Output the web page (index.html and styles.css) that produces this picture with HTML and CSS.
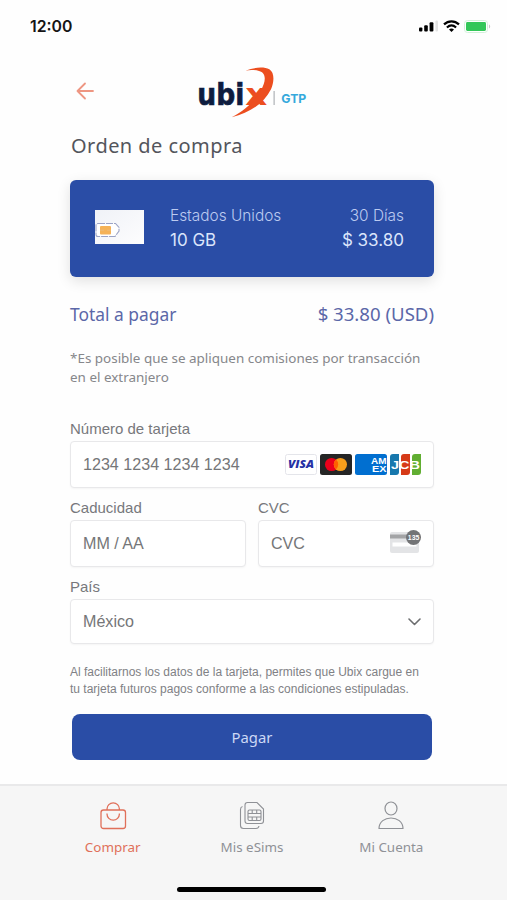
FILE: index.html
```
<!DOCTYPE html>
<html lang="es">
<head>
    <meta charset="UTF-8">
    <meta name="viewport" content="width=device-width, initial-scale=1.0">
    <title>Ubix | Orden de compra</title>
    <link rel="stylesheet" href="styles.css">
</head>
<body>
    <div class="status-bar">
        <span class="time">12:00</span>
        <div class="status-icons">
            <svg width="20" height="12" viewBox="0 0 20 12">
                <rect x="0" y="7.4" width="3.4" height="4.2" rx="1" fill="#000"/>
                <rect x="5.2" y="5.2" width="3.6" height="6.4" rx="1" fill="#000"/>
                <rect x="10.6" y="2.2" width="3.8" height="9.4" rx="1" fill="#000"/>
                <rect x="16.4" y="0.4" width="2.6" height="11.2" rx="1" fill="#e2e2e2"/>
            </svg>
            <svg width="17" height="12" viewBox="0 0 17 12" fill="none" stroke="#000" stroke-width="2.2">
                <path d="M1 4.4C5.4 0.3 11.6 0.3 16 4.4"/>
                <path d="M3.9 7.5C6.7 5 10.3 5 13.1 7.5"/>
                <path d="M6 9.4C7.5 8.2 9.5 8.2 11 9.4L8.5 12Z" fill="#000" stroke="none"/>
            </svg>
            <svg width="27" height="13" viewBox="0 0 27 13">
                <rect x="0.5" y="0.5" width="23" height="12" rx="3" fill="#fff" stroke="#d3f0da"/>
                <rect x="2" y="2" width="20" height="9" rx="1.4" fill="#33c759"/>
                <path d="M25 4.5v4c1.6-.6 1.6-3.4 0-4z" fill="#c8c8c8"/>
            </svg>
        </div>
    </div>

    <main class="content">
        <header class="top">
            <a class="back" href="#" aria-label="Volver">
                <svg width="20" height="18" viewBox="0 0 20 18" fill="none" stroke="#ee9682" stroke-width="1.8" stroke-linecap="round" stroke-linejoin="round">
                    <path d="M17 9H1.5M9 1.5L1.5 9L9 16.5"/>
                </svg>
            </a>
            <svg class="logo" width="112" height="54" viewBox="0 0 336 162">
                <text class="logo-name" x="1" y="121" font-size="88" textLength="141" lengthAdjust="spacingAndGlyphs">ubi</text>
                <text class="logo-x" x="145" y="121" font-size="88" textLength="66" lengthAdjust="spacingAndGlyphs">x</text>
                <path d="M145 17C172 7 200 4 217 13C234 24 231 52 222 73C202 114 160 143 104 157C145 136 174 108 192 76C207 48 209 24 186 18C173 14 158 14 145 17Z" fill="#ec4e1f"/>
                <rect x="230" y="78" width="2.5" height="42" fill="#8b8f96"/>
                <text class="logo-gtp" x="253" y="113" font-size="37" textLength="75" lengthAdjust="spacingAndGlyphs">GTP</text>
            </svg>
        </header>

        <h1>Orden de compra</h1>

        <section class="plan">
            <svg class="sim" width="49" height="34" viewBox="0 0 49 34">
                <defs>
                    <linearGradient id="simCard" x1="0" y1="0" x2="1" y2="1">
                        <stop offset="0" stop-color="#f0f2f7"/>
                        <stop offset="1" stop-color="#fdfdfe"/>
                    </linearGradient>
                </defs>
                <rect width="49" height="34" fill="url(#simCard)"/>
                <path d="M3 13.5H20.5L24 17.5V21L20 26.5H3Q1 26.5 1 24.5V15.5Q1 13.5 3 13.5Z" fill="#fff" stroke="#9ba3c5" stroke-width="1.1" stroke-dasharray="7 1"/>
                <rect x="5" y="16" width="11" height="8.5" rx="1" fill="#f5b257"/>
                <path d="M5 20.2H9M12 20.2H16" stroke="#e8c087" stroke-width=".7"/>
            </svg>
            <div class="plan-info">
                <span>Estados Unidos</span>
                <span class="plan-value">10 GB</span>
            </div>
            <div class="plan-info plan-right">
                <span>30 Días</span>
                <span class="plan-value">$ 33.80</span>
            </div>
        </section>

        <div class="total">
            <span>Total a pagar</span>
            <span class="total-amount">$ 33.80 (USD)</span>
        </div>

        <p class="note">*Es posible que se apliquen comisiones por transacción<br>en el extranjero</p>

        <form>
            <label for="card">Número de tarjeta</label>
            <div class="field">
                <input type="text" id="card" placeholder="1234 1234 1234 1234">
                <div class="brands">
                    <svg width="32" height="21" viewBox="0 0 32 21">
                        <rect x=".5" y=".5" width="31" height="20" rx="2" fill="#fff" stroke="#e4e5ea"/>
                        <text class="visa" x="3" y="14.4" font-size="11" textLength="26" lengthAdjust="spacingAndGlyphs">VISA</text>
                    </svg>
                    <svg width="32" height="21" viewBox="0 0 32 21">
                        <rect width="32" height="21" rx="2.5" fill="#252525"/>
                        <circle cx="11.6" cy="10.5" r="6.6" fill="#eb001b"/>
                        <circle cx="20.4" cy="10.5" r="6.6" fill="#f79e1b"/>
                        <path d="M16 5.6A6.6 6.6 0 0 1 16 15.4A6.6 6.6 0 0 1 16 5.6Z" fill="#ff5f00"/>
                    </svg>
                    <svg width="32" height="21" viewBox="0 0 32 21">
                        <rect width="32" height="21" rx="2.5" fill="#016fd0"/>
                        <text class="amex" x="16" y="9.6" font-size="8.5" textLength="15.5" lengthAdjust="spacingAndGlyphs">AM</text>
                        <text class="amex" x="17" y="18" font-size="8.5" textLength="14.5" lengthAdjust="spacingAndGlyphs">EX</text>
                    </svg>
                    <svg width="32" height="21" viewBox="0 0 32 21">
                        <path d="M3 0H9V18Q9 21 6 21H0V3Q0 0 3 0Z" fill="#1878ad"/>
                        <path d="M14 0H20V18Q20 21 17 21H11V3Q11 0 14 0Z" fill="#d63a18"/>
                        <path d="M25 0H31V18Q31 21 28 21H22V3Q22 0 25 0Z" fill="#61ae32"/>
                        <text class="jcb" x="1" y="14.5" font-size="11.5" textLength="29" lengthAdjust="spacingAndGlyphs">JCB</text>
                    </svg>
                </div>
            </div>

            <div class="row">
                <div class="col">
                    <label for="expiry">Caducidad</label>
                    <div class="field">
                        <input type="text" id="expiry" placeholder="MM / AA">
                    </div>
                </div>
                <div class="col">
                    <label for="cvc">CVC</label>
                    <div class="field">
                        <input type="text" id="cvc" placeholder="CVC">
                        <svg class="cvc-icon" width="32" height="24" viewBox="0 0 32 24">
                            <rect x="0" y="2" width="29" height="21" rx="2" fill="#e3e4e6"/>
                            <rect x="0" y="4.5" width="29" height="4" fill="#a3a4a6"/>
                            <rect x="2.5" y="12.5" width="24" height="4" fill="#fff"/>
                            <circle cx="23.5" cy="7.5" r="7.5" fill="#737476"/>
                            <text class="cvc-digits" x="17.8" y="10.4" font-size="8" textLength="11.5" lengthAdjust="spacingAndGlyphs">135</text>
                        </svg>
                    </div>
                </div>
            </div>

            <label for="country">País</label>
            <div class="field field-select">
                <input type="text" id="country" placeholder="México" readonly>
                <svg width="13" height="8" viewBox="0 0 13 8" fill="none" stroke="#6d6e70" stroke-width="1.6" stroke-linecap="round" stroke-linejoin="round">
                    <path d="M1 1L6.5 6.5L12 1"/>
                </svg>
            </div>

            <p class="terms">Al facilitarnos los datos de la tarjeta, permites que Ubix cargue en<br>tu tarjeta futuros pagos conforme a las condiciones estipuladas.</p>

            <button type="button">Pagar</button>
        </form>
    </main>

    <nav class="tabs">
        <a class="tab active" href="#">
            <svg width="28" height="30" viewBox="0 0 28 30" fill="none" stroke="currentColor" stroke-width="1.3">
                <rect x="2" y="9" width="24.5" height="18.5" rx="2.5"/>
                <path d="M8 9V8A6.2 6.2 0 0 1 20.4 8V9M8 12.5V13A6.2 6.2 0 0 0 20.4 13V12.5"/>
            </svg>
            <span>Comprar</span>
        </a>
        <a class="tab" href="#">
            <svg width="28" height="30" viewBox="0 0 28 30" fill="none" stroke="currentColor" stroke-width="1.1">
                <path d="M9.5 1.5H19L25.5 8V20Q25.5 22.5 23 22.5H9.5Q7 22.5 7 20V4Q7 1.5 9.5 1.5Z"/>
                <path d="M4.5 5.5Q2.5 6 2.5 8.5V24.5Q2.5 27.5 5.5 27.5H18Q20.5 27.5 21 25"/>
                <rect x="10" y="9" width="13" height="10.5" rx="1.5"/>
                <path d="M10 12.5H23M10 16H23M14.2 9V12.5M18.7 9V12.5M14.2 16V19.5M18.7 16V19.5"/>
            </svg>
            <span>Mis eSims</span>
        </a>
        <a class="tab" href="#">
            <svg width="28" height="30" viewBox="0 0 28 30" fill="none" stroke="currentColor" stroke-width="1.2">
                <ellipse cx="14" cy="7.5" rx="6" ry="6.5"/>
                <path d="M2 27.5C2 13.5 26 13.5 26 27.5Z" stroke-linejoin="round"/>
            </svg>
            <span>Mi Cuenta</span>
        </a>
        <div class="home-bar"></div>
    </nav>
</body>
</html>
```
FILE: styles.css
```
:root {
    --primary: #2a4da6;
    --accent: #e0705a;
    --text: #53555c;
    --muted: #77787c;
    --border: #e8e8ea;
}

* {
    box-sizing: border-box;
}

body {
    margin: 0;
    width: 507px;
    height: 900px;
    display: flex;
    flex-direction: column;
    overflow: hidden;
    background: #fefefe;
    color: var(--text);
    font-family: "Noto Sans", "Open Sans", sans-serif;
}

.status-bar {
    height: 52px;
    padding: 0 16px 0 30px;
    display: flex;
    justify-content: space-between;
    align-items: center;
}

.time {
    font-family: Inter, sans-serif;
    font-weight: 600;
    font-size: 15.8px;
    color: #151515;
}

.status-icons {
    display: flex;
    align-items: center;
    gap: 4px;
}

.content {
    flex: 1;
    padding: 0 73px 0 70px;
}

.top {
    height: 70px;
    padding-left: 6px;
    display: flex;
    align-items: center;
}

.back {
    display: flex;
    margin-top: 8px;
}

.logo {
    margin-left: 101px;
    margin-top: 10px;
}

.logo text {
    font-family: "DejaVu Sans", sans-serif;
    font-weight: bold;
}

.logo-name {
    fill: #0e1c3f;
    stroke: #0e1c3f;
    stroke-width: 2;
}

.logo-x {
    fill: #ec4e1f;
}

.logo .logo-gtp {
    font-family: Inter, sans-serif;
    fill: #35a9dc;
}

h1 {
    margin: 9px 0 19px 1px;
    font-size: 20px;
    font-weight: 400;
    line-height: 30px;
    letter-spacing: 0.45px;
}

.plan {
    height: 97px;
    padding: 0 30px 0 25px;
    display: flex;
    align-items: center;
    background: var(--primary);
    border-radius: 6px;
    box-shadow: 0 4px 14px rgba(0, 0, 0, 0.12);
    font-family: Inter, sans-serif;
}

.sim {
    margin-bottom: 4px;
}

.plan-info {
    display: flex;
    flex-direction: column;
    margin-left: 26px;
    margin-bottom: 2px;
    font-size: 15.4px;
    font-weight: 300;
    line-height: 24px;
    color: #bccaf0;
}

.plan-right {
    margin-left: auto;
    text-align: right;
}

.plan-value {
    font-size: 17px;
    font-weight: 400;
    color: #dbe5fb;
}

.total {
    margin-top: 22px;
    display: flex;
    justify-content: space-between;
    font-size: 17.4px;
    line-height: 30px;
    color: #5b67a8;
}

.total-amount {
    font-size: 18.6px;
}

.note {
    margin: 20px 0 0;
    font-size: 13.45px;
    line-height: 18.5px;
    color: #86878b;
}

form {
    margin-top: 32px;
    font-family: "Liberation Sans", Arial, sans-serif;
}

label {
    display: block;
    height: 23px;
    line-height: 22px;
    font-size: 15px;
    color: var(--muted);
}

.field {
    height: 47px;
    padding: 0 12px;
    display: flex;
    align-items: center;
    border: 1px solid var(--border);
    border-radius: 4px;
    background: #fff;
    box-shadow: 0 1px 2px rgba(0, 0, 0, 0.04);
}

.field input {
    flex: 1;
    min-width: 0;
    padding: 0;
    border: none;
    outline: none;
    background: none;
    font-family: inherit;
    font-size: 16.1px;
}

.field input::placeholder {
    color: #757678;
    opacity: 1;
}

.brands {
    display: flex;
    gap: 3px;
    margin-right: -1px;
}

.visa {
    font-family: "Open Sans", sans-serif;
    font-weight: 800;
    font-style: italic;
    fill: #2631a5;
}

.amex,
.jcb,
.cvc-digits {
    font-family: "Liberation Sans", sans-serif;
    font-weight: bold;
    fill: #fff;
}

.row {
    display: flex;
    gap: 12px;
    margin: 9px 0;
}

.col {
    flex: 1;
    min-width: 0;
}

.cvc-icon {
    margin-right: -1px;
    margin-bottom: 4px;
}

.field-select {
    height: 45px;
}

.terms {
    margin: 20px 0 0;
    font-size: 12px;
    line-height: 17px;
    color: #808185;
}

button {
    display: block;
    width: 360px;
    height: 46px;
    margin: 16px 0 0 2px;
    border: none;
    border-radius: 8px;
    background: var(--primary);
    color: #ccd8f5;
    font-family: "Noto Sans", sans-serif;
    font-size: 14.8px;
    cursor: pointer;
}

.tabs {
    height: 116px;
    padding: 15px 46px 0 43px;
    display: grid;
    grid-template-columns: repeat(3, 1fr);
    grid-template-rows: 86px 5px;
    border-top: 2px solid #e9e9ea;
    background: #f6f6f6;
}

.tab {
    display: flex;
    flex-direction: column;
    align-items: center;
    color: #8f9196;
    font-size: 13.4px;
    line-height: 32px;
    text-decoration: none;
}

.tab.active {
    color: var(--accent);
}

.home-bar {
    grid-column: 1 / -1;
    justify-self: center;
    width: 149px;
    height: 5px;
    border-radius: 3px;
    background: #000;
}
```
